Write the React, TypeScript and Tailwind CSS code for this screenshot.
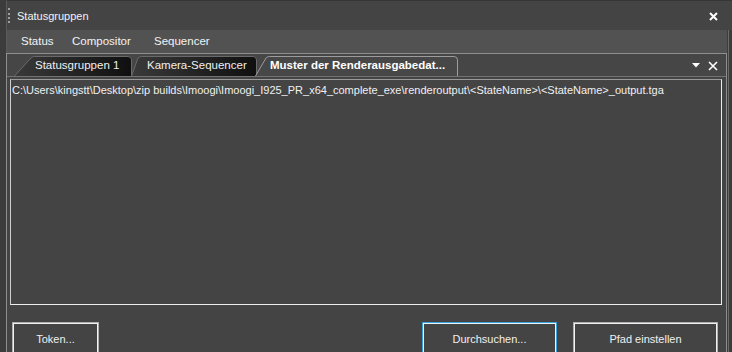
import React from "react";

function TabShape({ w, slant, active, id }: { w: number; slant: number; active?: boolean; id: string }) {
  const h = 21;
  const d = `M0.5 ${h} L${slant - 2} 3 Q${slant - 0.5} 1.5 ${slant + 1.5} 1.5 L${w - 4} 1.5 Q${w - 0.5} 1.5 ${w - 0.5} 5 L${w - 0.5} ${h}`;
  return (
    <svg className="absolute left-0 top-0" width={w} height={h} viewBox={`0 0 ${w} ${h}`}>
      <defs>
        <linearGradient id={id} x1="0" y1="0" x2="1" y2="0">
          <stop offset="0" stopColor="#3a3a3a" />
          <stop offset="1" stopColor="#0f0f0f" />
        </linearGradient>
      </defs>
      <path d={d + " Z"} fill={active ? "#474747" : `url(#${id})`} stroke="none" />
      <path d={d} fill="none" stroke={active ? "#9c9c9c" : "#6a6a6a"} strokeWidth="1" />
    </svg>
  );
}

function Tab({ w, slant, pl, label, active, id }: { w: number; slant: number; pl: number; label: string; active?: boolean; id: string }) {
  return (
    <div className="relative h-[21px] shrink-0" style={{ width: w }}>
      <TabShape w={w} slant={slant} active={active} id={id} />
      <div
        className={`relative h-full flex items-center pt-[1px] text-[11.5px] whitespace-nowrap ${active ? "font-bold text-white" : "text-[#f0f0f0]"}`}
        style={{ paddingLeft: pl }}
      >
        {label}
      </div>
    </div>
  );
}

export default function App() {
  return (
    <div className="w-[732px] h-[352px] overflow-hidden bg-[#3c3c3c] flex flex-col text-[#f2f2f2] font-['Liberation_Sans',Arial,sans-serif]">
      {/* Title bar */}
      <div className="h-[30px] shrink-0 ml-[6px] bg-[#444444] border-l border-[#5a5a5a] border-t border-t-[#363636] flex items-center">
        <div className="ml-[1px] w-[2px] h-[15px] border-l-2 border-dotted border-[#a0a0a0]" />
        <div className="ml-[7px] pt-[2px] text-[11px] text-[#f2f2f2]">Statusgruppen</div>
        <div className="ml-auto mr-[14px] pt-[1px]">
          <svg width="9" height="9" viewBox="0 0 9 9">
            <path d="M1 1 L8 8 M8 1 L1 8" stroke="#ffffff" strokeWidth="2" />
          </svg>
        </div>
      </div>

      {/* Panel */}
      <div className="flex-1 flex">
        <div className="ml-[6px] w-[721px] flex flex-col">
          {/* Menu bar */}
          <div className="h-[23px] shrink-0 bg-[#525252] border-l border-[#5a5a5a] flex items-center text-[11.5px] text-[#f2f2f2]">
            <div className="ml-[14px] w-[51px]">Status</div>
            <div className="w-[82px]">Compositor</div>
            <div>Sequencer</div>
          </div>

          {/* Tab control */}
          <div className="flex-1 flex flex-col border-t border-l border-r border-[#8e8e8e] bg-[#444444]">
            {/* header */}
            <div className="h-[23px] shrink-0 bg-[#464646] border-b border-[#727272] flex items-end pl-[7px]">
              <div className="flex items-end">
                <Tab w={118} slant={19} pl={21} label="Statusgruppen 1" id="g1" />
                <div className="-ml-[1px]">
                  <Tab w={126} slant={9} pl={16} label="Kamera-Sequencer" id="g2" />
                </div>
                <div className="-ml-[2px]">
                  <Tab w={203} slant={13} pl={15} label="Muster der Renderausgabedat..." active id="g3" />
                </div>
              </div>
              <div className="ml-auto mr-[8px] h-full flex items-center gap-[8px] pt-[1px]">
                <svg width="8" height="5" viewBox="0 0 8 5">
                  <path d="M0 0 L8 0 L4 4.5 Z" fill="#ffffff" />
                </svg>
                <svg width="10" height="10" viewBox="0 0 10 10">
                  <path d="M1 1 L9 9 M9 1 L1 9" stroke="#ffffff" strokeWidth="1.6" />
                </svg>
              </div>
            </div>

            {/* content */}
            <div className="flex-1 flex flex-col pt-[2px] pl-[3px] pr-[4px]">
              <div className="h-[226px] shrink-0 border border-t-[#9a9a9a] border-l-[#cfcfcf] border-b-[#ededed] border-r-[#ededed] bg-[#444444] pl-[1px] pt-[3px]">
                <div className="text-[11px] leading-[14px] text-[#f0f0f0] whitespace-nowrap">
                  C:\Users\kingstt\Desktop\zip builds\Imoogi\Imoogi_I925_PR_x64_complete_exe\renderoutput\&lt;StateName&gt;\&lt;StateName&gt;_output.tga
                </div>
              </div>
              <div className="mt-[17px] flex text-[11px] text-[#f0f0f0]">
                <div className="ml-[2px] w-[87px] h-[34px] border border-[#b0b0b0] shadow-[inset_0_0_0_1px_#f2f2f2] flex items-center justify-center">
                  Token...
                </div>
                <div className="ml-auto w-[135px] h-[34px] border border-[#3aa3dc] shadow-[inset_0_0_0_1px_#eaf4fb] flex items-center justify-center">
                  Durchsuchen...
                </div>
                <div className="ml-[16px] mr-[4px] w-[145px] h-[34px] border border-[#b0b0b0] shadow-[inset_0_0_0_1px_#f2f2f2] flex items-center justify-center">
                  Pfad einstellen
                </div>
              </div>
            </div>
          </div>
        </div>
        <div className="w-[1px] ml-[1px] bg-[#6a6a6a]" />
      </div>
    </div>
  );
}
